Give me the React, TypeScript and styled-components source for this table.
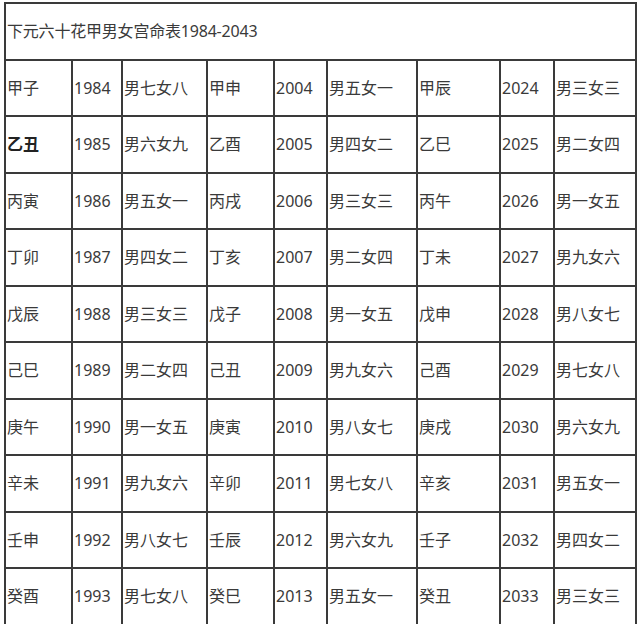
import React from "react";
import styled, {createGlobalStyle} from "styled-components";

const GlobalStyle = createGlobalStyle`
    html, body {
        margin: 0;
        padding: 0;
        background: #ffffff;
    }
    body {
        font-family: "Noto Sans", "Noto Sans CJK SC", sans-serif;
        color: #333333;
    }
`;

const colWidths = [67, 50, 85, 67, 53, 90, 83, 54, 82];

type Entry = [string, string, string];

const rows: Entry[][] = [
    [["甲子", "1984", "男七女八"], ["甲申", "2004", "男五女一"], ["甲辰", "2024", "男三女三"]],
    [["乙丑", "1985", "男六女九"], ["乙酉", "2005", "男四女二"], ["乙巳", "2025", "男二女四"]],
    [["丙寅", "1986", "男五女一"], ["丙戌", "2006", "男三女三"], ["丙午", "2026", "男一女五"]],
    [["丁卯", "1987", "男四女二"], ["丁亥", "2007", "男二女四"], ["丁未", "2027", "男九女六"]],
    [["戊辰", "1988", "男三女三"], ["戊子", "2008", "男一女五"], ["戊申", "2028", "男八女七"]],
    [["己巳", "1989", "男二女四"], ["己丑", "2009", "男九女六"], ["己酉", "2029", "男七女八"]],
    [["庚午", "1990", "男一女五"], ["庚寅", "2010", "男八女七"], ["庚戌", "2030", "男六女九"]],
    [["辛未", "1991", "男九女六"], ["辛卯", "2011", "男七女八"], ["辛亥", "2031", "男五女一"]],
    [["壬申", "1992", "男八女七"], ["壬辰", "2012", "男六女九"], ["壬子", "2032", "男四女二"]],
    [["癸酉", "1993", "男七女八"], ["癸巳", "2013", "男五女一"], ["癸丑", "2033", "男三女三"]],
];

const Page = styled.div`
    padding: 2px 0 0 4px;
`;

const Table = styled.table`
    border-collapse: collapse;
    table-layout: fixed;
    width: 633px;
    border: 2px solid #3a3a3a;
`;

const Row = styled.tr`
    height: 56.5px;
`;

const Cell = styled.td<{ $bold?: boolean }>`
    border: 2px solid #3a3a3a;
    padding: 0 0 0 1px;
    vertical-align: middle;
    font-size: 16px;
    line-height: 20px;
    white-space: nowrap;
    overflow: hidden;
    font-weight: ${p => (p.$bold ? 700 : 400)};
    color: ${p => (p.$bold ? "#222222" : "#3a3a3a")};
`;

const TitleCell = styled(Cell)`
    padding-left: 1px;
    letter-spacing: -0.2px;
`;

const App = () => {
    return (
        <>
            <GlobalStyle/>
            <Page>
                <Table>
                    <colgroup>
                        {colWidths.map((w, i) => (
                            <col key={i} style={{width: w}}/>
                        ))}
                    </colgroup>
                    <tbody>
                    <Row>
                        <TitleCell colSpan={9}>下元六十花甲男女宫命表1984-2043</TitleCell>
                    </Row>
                    {rows.map((row, r) => (
                        <Row key={r}>
                            {row.map((entry, g) =>
                                entry.map((text, c) => (
                                    <Cell key={g + "-" + c} $bold={r === 1 && g === 0 && c === 0}>
                                        {text}
                                    </Cell>
                                ))
                            )}
                        </Row>
                    ))}
                    </tbody>
                </Table>
            </Page>
        </>
    );
};

export default App;
